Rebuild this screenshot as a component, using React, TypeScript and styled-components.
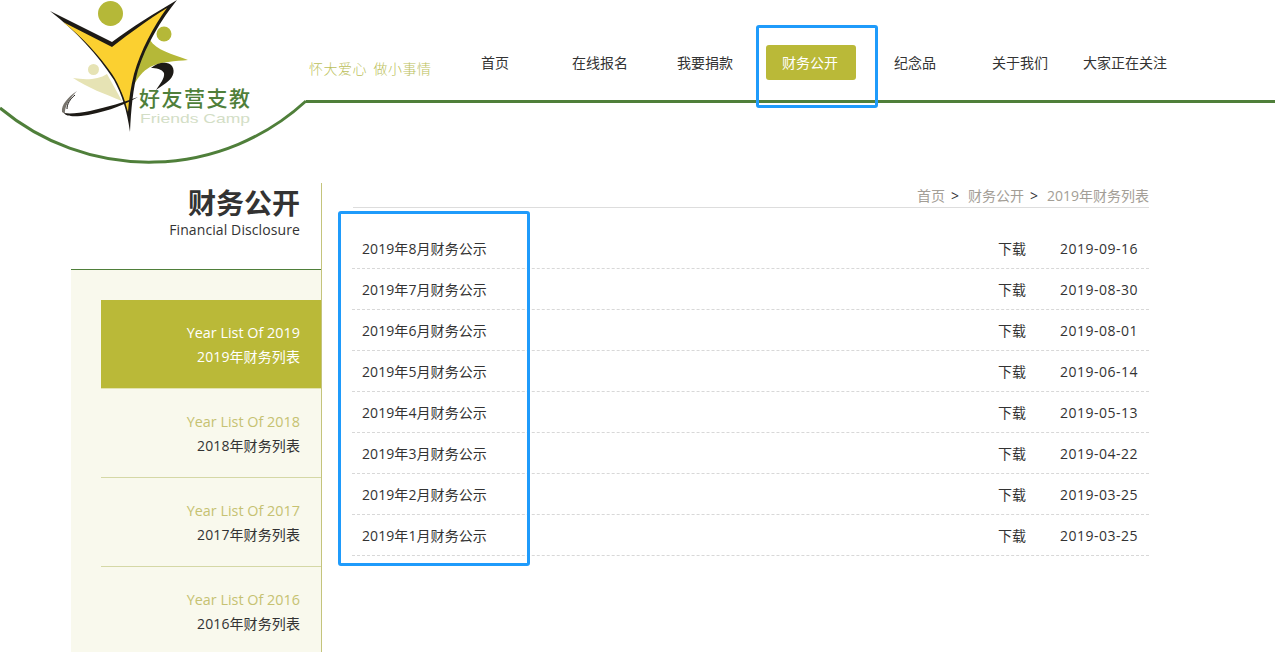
import React from 'react';
import styled, { createGlobalStyle } from 'styled-components';

const GlobalStyle = createGlobalStyle`
  html, body {
    margin: 0;
    padding: 0;
    background: #fff;
    overflow: hidden;
  }
  body {
    font-family: "Open Sans", "Noto Sans CJK SC", sans-serif;
    font-size: 14px;
    color: #333;
  }
  * { box-sizing: border-box; }
`;

const Page = styled.div`
  position: relative;
  width: 1275px;
  height: 652px;
  overflow: hidden;
`;

const Header = styled.header`
  position: relative;
  height: 183px;
  padding: 45px 0 0 451px;
`;

const HeaderArt = styled.svg`
  position: absolute;
  left: 0;
  top: 0;
`;

const GreenLine = styled.div`
  position: absolute;
  left: 306px;
  right: 0;
  top: 100px;
  height: 3px;
  background: #4f7f3a;
`;

const Slogan = styled.div`
  position: absolute;
  left: 309px;
  top: 59px;
  font-family: "Noto Sans CJK SC", serif;
  font-size: 14px;
  font-weight: 300;
  letter-spacing: 0.5px;
  word-spacing: 3px;
  line-height: 18px;
  color: #bcbf5c;
  white-space: nowrap;
`;

const Nav = styled.nav`
  display: flex;
`;

const NavItem = styled.a<{ $active?: boolean }>`
  width: 90px;
  height: 35px;
  margin-right: 15px;
  flex: none;
  border-radius: 3px;
  text-align: center;
  text-indent: -2px;
  line-height: 36px;
  font-size: 14px;
  white-space: nowrap;
  color: ${p => (p.$active ? '#fff' : '#333')};
  background: ${p => (p.$active ? '#bab938' : 'transparent')};
`;

const Body = styled.div`
  display: flex;
  padding-left: 71px;
`;

const Side = styled.aside`
  width: 251px;
  height: 469px;
  flex: none;
  border-right: 1px solid #c4c47c;
`;

const SideHead = styled.div`
  height: 87px;
  padding: 3px 21px 0 0;
  text-align: right;
  border-bottom: 1px solid #4f7f3a;
`;

const SideTitle = styled.h1`
  margin: 0;
  font-size: 28px;
  line-height: 35px;
  font-weight: 700;
  color: #333;
`;

const SideSub = styled.div`
  font-size: 14px;
  letter-spacing: 0.1px;
  line-height: 18px;
  color: #333;
`;

const SideList = styled.ul`
  list-style: none;
  margin: 0;
  padding: 30px 0 0 30px;
  height: 382px;
  background: #f9f9ed;
`;

const YearItem = styled.li<{ $active?: boolean }>`
  height: 89px;
  padding: 21px 21px 0 0;
  text-align: right;
  background: ${p => (p.$active ? '#bab938' : 'transparent')};
  border-bottom: 1px solid ${p => (p.$active ? '#e3e3b0' : '#d5d8a6')};
`;

const YearEn = styled.div<{ $active?: boolean }>`
  font-size: 14.4px;
  line-height: 24px;
  color: ${p => (p.$active ? '#fff' : '#c6c272')};
`;

const YearCn = styled.div<{ $active?: boolean }>`
  font-size: 14px;
  letter-spacing: 0.1px;
  line-height: 24px;
  color: ${p => (p.$active ? '#fff' : '#333')};
`;

const Main = styled.main`
  width: 798px;
  margin-left: 29px;
  flex: none;
`;

const Crumbs = styled.div`
  height: 25px;
  margin-left: 2px;
  padding-top: 3px;
  text-align: right;
  line-height: 20px;
  font-size: 14px;
  color: #333;
  border-bottom: 1px solid #ddd;
  white-space: nowrap;
`;

const Crumb = styled.span`
  color: #a39e96;
`;

const Sep = styled.span`
  margin: 0 9px 0 6px;
`;

const Rows = styled.ul`
  list-style: none;
  margin: 20px 0 0 1px;
  padding: 0;
`;

const Row = styled.li`
  display: flex;
  align-items: center;
  height: 41px;
  padding: 0 11px 0 10px;
  border-bottom: 1px dashed #d8d8d8;
  font-size: 14px;
  color: #333;
`;

const RowTitle = styled.span`
  flex: 1;
  letter-spacing: 0.08px;
`;

const RowLink = styled.span`
  width: 62px;
`;

const RowDate = styled.span`
  width: 78px;
  letter-spacing: 0.5px;
  white-space: nowrap;
`;

const Mark = styled.div`
  position: absolute;
  border: 3px solid #1f9bfb;
  border-radius: 3px;
  pointer-events: none;
`;

const NavMark = styled(Mark)`
  left: 756px;
  top: 25px;
  width: 122px;
  height: 83px;
`;

const ListMark = styled(Mark)`
  left: 338px;
  top: 211px;
  width: 192px;
  height: 355px;
`;

const navs = ['首页', '在线报名', '我要捐款', '财务公开', '纪念品', '关于我们', '大家正在关注'];
const years = ['2019', '2018', '2017', '2016'];
const rows = [
  ['2019年8月财务公示', '2019-09-16'],
  ['2019年7月财务公示', '2019-08-30'],
  ['2019年6月财务公示', '2019-08-01'],
  ['2019年5月财务公示', '2019-06-14'],
  ['2019年4月财务公示', '2019-05-13'],
  ['2019年3月财务公示', '2019-04-22'],
  ['2019年2月财务公示', '2019-03-25'],
  ['2019年1月财务公示', '2019-03-25'],
];

const Art = () => (
  <HeaderArt width="330" height="170" viewBox="0 0 330 170">
    <path d="M0 108 A232 232 0 0 0 306 101" fill="none" stroke="#4f7f3a" strokeWidth="3" />
    <circle cx="110.5" cy="13.5" r="12.5" fill="#b5b838" />
    <circle cx="164" cy="34" r="7.5" fill="#b5b838" />
    <circle cx="93.5" cy="69.5" r="5.5" fill="#e6e3b4" />
    <path d="M73 78 C85 80 98 80 107 74 L122 101 C105 94 88 88 73 78Z" fill="#e6e3b4" />
    <path d="M150 40 C156 50 172 54 188 60 C176 61 160 62 150 67 C143 71 137 78 131 90 L140 50Z" fill="#b5b838" />
    <path d="M50 11 L112 42 C132 27 155 13 177 0 C161 20 146 45 138 70 C133 88 131 110 130 132 C127 110 122 95 114 80 C98 55 76 31 50 11Z" fill="#1d1a16" />
    <path d="M63 22 L112 47 C130 33 149 19 167 8 C153 27 141 50 134 74 C131 86 129 98 128 112 C125 100 120 86 112 74 C99 55 82 37 63 22Z" fill="#fbd030" />
    <path d="M151 68 C158 62 168 61 172 66 C176 72 172 79 166 83 L156 90 C160 84 165 78 164 73 C162 69 156 68 151 68Z" fill="#1d1a16" />
    <path d="M138 97 C128 103 110 111 88 115 C76 117 66 117 64 113 C70 114 80 113 90 111 C108 107 124 102 138 97Z" fill="#1d1a16" />
    <path d="M77 91 C68 97 61 105 62 112 L65 114 C64 107 70 98 77 91Z" fill="#77736c" />
    <path d="M75 95 C70 99 67 104 67 109" fill="none" stroke="#1d1a16" strokeWidth="1" />
    <text x="139" y="106" fontFamily="'Noto Sans CJK SC', sans-serif" fontSize="21" fontWeight="500" fill="#4f7f3a" textLength="111" lengthAdjust="spacing">好友营支教</text>
    <text x="140" y="123" fontFamily="'Liberation Sans', sans-serif" fontSize="13" fill="#d3dec6" textLength="110" lengthAdjust="spacingAndGlyphs">Friends Camp</text>
  </HeaderArt>
);

export default function App() {
  return (
    <Page>
      <GlobalStyle />
      <Header>
        <Art />
        <GreenLine />
        <Slogan>怀大爱心 做小事情</Slogan>
        <Nav>
          {navs.map(n => (
            <NavItem key={n} $active={n === '财务公开'}>{n}</NavItem>
          ))}
        </Nav>
      </Header>
      <Body>
        <Side>
          <SideHead>
            <SideTitle>财务公开</SideTitle>
            <SideSub>Financial Disclosure</SideSub>
          </SideHead>
          <SideList>
            {years.map((y, i) => (
              <YearItem key={y} $active={i === 0}>
                <YearEn $active={i === 0}>Year List Of {y}</YearEn>
                <YearCn $active={i === 0}>{y}年财务列表</YearCn>
              </YearItem>
            ))}
          </SideList>
        </Side>
        <Main>
          <Crumbs>
            <Crumb>首页</Crumb><Sep>&gt;</Sep>
            <Crumb>财务公开</Crumb><Sep>&gt;</Sep>
            <Crumb>2019年财务列表</Crumb>
          </Crumbs>
          <Rows>
            {rows.map(r => (
              <Row key={r[0]}>
                <RowTitle>{r[0]}</RowTitle>
                <RowLink>下载</RowLink>
                <RowDate>{r[1]}</RowDate>
              </Row>
            ))}
          </Rows>
        </Main>
      </Body>
      <NavMark />
      <ListMark />
    </Page>
  );
}
